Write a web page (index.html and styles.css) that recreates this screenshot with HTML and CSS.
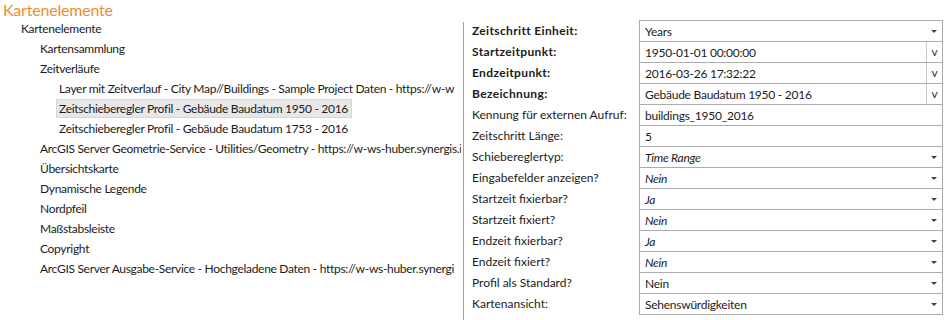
FILE: index.html
```html
<!DOCTYPE html>
<html lang="de">
<head>
    <meta charset="UTF-8">
    <title>Kartenelemente</title>
    <link rel="stylesheet" href="styles.css">
</head>
<body>
    <h1 class="page-title">Kartenelemente</h1>

    <div class="editor">
        <!-- Tree of map elements -->
        <div class="tree-pane">
            <ul class="tree">
                <li><span class="node">Kartenelemente</span>
                    <ul>
                        <li><span class="node">Kartensammlung</span></li>
                        <li><span class="node">Zeitverläufe</span>
                            <ul>
                                <li><span class="node">Layer mit Zeitverlauf - City Map//Buildings - Sample Project Daten - https://w-w</span></li>
                                <li><span class="node selected">Zeitschieberegler Profil - Gebäude Baudatum 1950 - 2016</span></li>
                                <li><span class="node">Zeitschieberegler Profil - Gebäude Baudatum 1753 - 2016</span></li>
                            </ul>
                        </li>
                        <li><span class="node">ArcGIS Server Geometrie-Service - Utilities/Geometry - https://w-ws-huber.synergis.i</span></li>
                        <li><span class="node">Übersichtskarte</span></li>
                        <li><span class="node">Dynamische Legende</span></li>
                        <li><span class="node">Nordpfeil</span></li>
                        <li><span class="node">Maßstabsleiste</span></li>
                        <li><span class="node">Copyright</span></li>
                        <li><span class="node">ArcGIS Server Ausgabe-Service - Hochgeladene Daten - https://w-ws-huber.synergi</span></li>
                    </ul>
                </li>
            </ul>
        </div>

        <div class="splitter"></div>

        <!-- Properties of the selected profile -->
        <div class="props">
            <div class="prop-label bold">Zeitschritt Einheit:</div>
            <div class="field"><span class="value">Years</span><span class="caret"></span></div>

            <div class="prop-label bold">Startzeitpunkt:</div>
            <div class="field"><span class="value">1950-01-01 00:00:00</span><span class="pick">v</span></div>

            <div class="prop-label bold">Endzeitpunkt:</div>
            <div class="field"><span class="value">2016-03-26 17:32:22</span><span class="pick">v</span></div>

            <div class="prop-label bold">Bezeichnung:</div>
            <div class="field"><span class="value">Gebäude Baudatum 1950 - 2016</span><span class="pick">v</span></div>

            <div class="prop-label">Kennung für externen Aufruf:</div>
            <div class="field"><span class="value">buildings_1950_2016</span></div>

            <div class="prop-label">Zeitschritt Länge:</div>
            <div class="field"><span class="value">5</span></div>

            <div class="prop-label">Schiebereglertyp:</div>
            <div class="field"><span class="value default">Time Range</span><span class="caret"></span></div>

            <div class="prop-label">Eingabefelder anzeigen?</div>
            <div class="field"><span class="value default">Nein</span><span class="caret"></span></div>

            <div class="prop-label">Startzeit fixierbar?</div>
            <div class="field"><span class="value default">Ja</span><span class="caret"></span></div>

            <div class="prop-label">Startzeit fixiert?</div>
            <div class="field"><span class="value default">Nein</span><span class="caret"></span></div>

            <div class="prop-label">Endzeit fixierbar?</div>
            <div class="field"><span class="value default">Ja</span><span class="caret"></span></div>

            <div class="prop-label">Endzeit fixiert?</div>
            <div class="field"><span class="value default">Nein</span><span class="caret"></span></div>

            <div class="prop-label">Profil als Standard?</div>
            <div class="field"><span class="value">Nein</span><span class="caret"></span></div>

            <div class="prop-label">Kartenansicht:</div>
            <div class="field last"><span class="value">Sehenswürdigkeiten</span><span class="caret"></span></div>
        </div>
    </div>
</body>
</html>
```

FILE: styles.css
```css
* {
    margin: 0;
    padding: 0;
    box-sizing: border-box;
}

body {
    background: #ffffff;
    color: #1b1b1b;
    font-family: 'Lato', 'Open Sans', sans-serif;
    font-size: 12px;
    width: 946px;
    height: 320px;
    overflow: hidden;
}

.page-title {
    height: 19px;
    padding-left: 3px;
    color: #ee8e30;
    font-size: 16px;
    font-weight: normal;
    line-height: 19px;
    letter-spacing: -0.2px;
}

.editor {
    display: flex;
    align-items: flex-start;
}

/* Tree */
.tree-pane {
    width: 461px;
    margin-right: 2px;
    overflow: hidden;
    white-space: nowrap;
    letter-spacing: -0.3px;
}

.tree {
    list-style: none;
    padding-left: 21px;
}

.tree ul {
    list-style: none;
    padding-left: 19px;
}

.node {
    display: inline-block;
    height: 20px;
    line-height: 20px;
}

.node.selected {
    height: 19px;
    line-height: 17px;
    margin: 0 0 1px -3px;
    padding: 0 3px 0 2px;
    background: #e7e7e7;
    border: 1px solid #d6d6d6;
}

.splitter {
    width: 1px;
    height: 298px;
    margin-top: 3px;
    background: #a3a3a3;
}

/* Property grid */
.props {
    display: grid;
    grid-template-columns: 167px 304px;
    grid-auto-rows: 21px;
    margin-left: 8px;
    margin-top: 1px;
}

.prop-label {
    line-height: 21px;
    white-space: nowrap;
}

.prop-label.bold {
    font-weight: bold;
    letter-spacing: 0.35px;
}

.field {
    display: flex;
    align-items: center;
    border: 1px solid #ababab;
    border-bottom: none;
}

.field.last {
    border-bottom: 1px solid #ababab;
    height: 22px;
}

.value {
    flex: 1;
    padding-left: 5px;
    letter-spacing: -0.25px;
}

.value.default {
    font-style: italic;
}

.caret {
    width: 0;
    height: 0;
    margin-right: 5px;
    border-left: 3px solid transparent;
    border-right: 3px solid transparent;
    border-top: 3px solid #404040;
}

.pick {
    width: 16px;
    height: 100%;
    border-left: 1px solid #c8c8c8;
    text-align: center;
    line-height: 19px;
    color: #333;
}
```
